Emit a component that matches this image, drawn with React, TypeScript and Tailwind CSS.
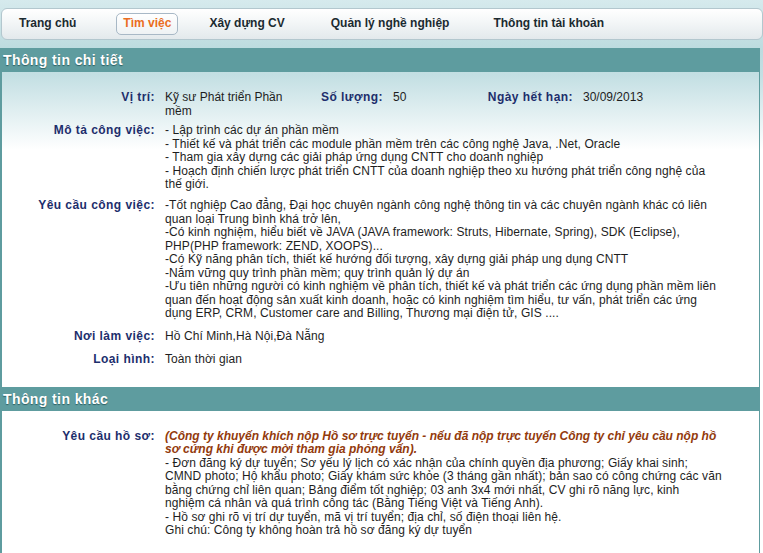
const font = { fontFamily: '"Liberation Sans", Arial, sans-serif' };

const moTa = [
  "- Lập trình các dự án phần mềm",
  "- Thiết kế và phát triển các module phần mềm trên các công nghệ Java, .Net, Oracle",
  "- Tham gia xây dựng các giải pháp ứng dụng CNTT cho doanh nghiệp",
  "- Hoạch định chiến lược phát triển CNTT của doanh nghiệp theo xu hướng phát triển công nghệ của",
  "thế giới.",
];

const yeuCau = [
  "-Tốt nghiệp Cao đẳng, Đại học chuyên ngành công nghệ thông tin và các chuyên ngành khác có liên",
  "quan loại Trung bình khá trở lên,",
  "-Có kinh nghiệm, hiểu biết về JAVA (JAVA framework: Struts, Hibernate, Spring), SDK (Eclipse),",
  "PHP(PHP framework: ZEND, XOOPS)...",
  "-Có Kỹ năng phân tích, thiết kế hướng đối tượng, xây dựng giải pháp ung dụng CNTT",
  "-Nắm vững quy trình phần mềm; quy trình quản lý dự án",
  "-Ưu tiên những người có kinh nghiệm về phân tích, thiết kế và phát triển các ứng dụng phần mềm liên",
  "quan đến hoạt động sản xuất kinh doanh, hoặc có kinh nghiệm tìm hiểu, tư vấn, phát triển các ứng",
  "dụng ERP, CRM, Customer care and Billing, Thương mại điện tử, GIS ....",
];

const hoSo = [
  "- Đơn đăng ký dự tuyển; Sơ yếu lý lịch có xác nhận của chính quyền địa phương; Giấy khai sinh;",
  "CMND photo; Hộ khẩu photo; Giấy khám sức khỏe (3 tháng gần nhất); bản sao có công chứng các văn",
  "bằng chứng chỉ liên quan; Bảng điểm tốt nghiệp; 03 anh 3x4 mới nhất, CV ghi rõ năng lực, kinh",
  "nghiệm cá nhân và quá trình công tác (Bằng Tiếng Việt và Tiếng Anh).",
  "- Hồ sơ ghi rõ vị trí dự tuyển, mã vị trí tuyển; địa chỉ, số điện thoại liên hệ.",
  "Ghi chú: Công ty không hoàn trả hồ sơ đăng ký dự tuyển",
];

function Label({ children, w = "w-[153px]" }: { children: React.ReactNode; w?: string }) {
  return (
    <div className={`${w} shrink-0 whitespace-nowrap text-right font-bold tracking-[0.45px] text-[#1d2e6c]`}>
      {children}
    </div>
  );
}

function Lines({ lines }: { lines: string[] }) {
  return (
    <div className="ml-[10px] tracking-[0.08px] text-[#1e1e1e]">
      {lines.map((l, i) => (
        <div key={i} className="whitespace-nowrap">
          {l}
        </div>
      ))}
    </div>
  );
}

function SectionHeader({ title }: { title: string }) {
  return (
    <div className="h-[24px] w-[760px] bg-[#5e9c9f] pl-[3px] text-[14px] font-bold leading-[24px] tracking-[0.4px] text-white [text-shadow:0_1px_1px_#2d5f62]">
      {title}
    </div>
  );
}

export default function App() {
  const tabs = ["Trang chủ", "Tìm việc", "Xây dựng CV", "Quản lý nghề nghiệp", "Thông tin tài khoản"];

  return (
    <div
      style={font}
      className="min-h-[553px] w-[763px] overflow-hidden bg-[linear-gradient(to_bottom,#d6eaed_0px,#bcdbdf_50px,#c3dfe3_75px,#ffffff_150px)] text-[12px] leading-[13.5px]"
    >
      {/* Menu */}
      <div className="pt-[8px] pb-[8px]">
        <div className="ml-[1px] flex h-[32px] w-[762px] items-center rounded-[6px] border border-[#b3c7ce] bg-[linear-gradient(to_bottom,#ffffff,#f3f6f7_45%,#e3e9ec)] text-[12px] font-bold text-[#1b2a30]">
          <span className="ml-[17px]">{tabs[0]}</span>
          <span className="ml-[40px] flex h-[22px] items-center rounded-[5px] border border-[#a8b8c6] bg-[linear-gradient(to_bottom,#ffffff,#eef2f4)] px-[6px] text-[#ea6d22]">
            {tabs[1]}
          </span>
          <span className="ml-[31px]">{tabs[2]}</span>
          <span className="ml-[46px]">{tabs[3]}</span>
          <span className="ml-[44px]">{tabs[4]}</span>
        </div>
      </div>

      <SectionHeader title="Thông tin chi tiết" />

      {/* Chi tiết */}
      <div className="w-[760px] border-l-2 border-r border-[#5e9c9f] pt-[19px] pb-[20px]">
        <div className="flex">
          <Label>Vị trí:</Label>
          <div className="ml-[10px] w-[130px] shrink-0 text-[#1e1e1e]">Kỹ sư Phát triển Phần mềm</div>
          <Label w="w-[88px]">Số lượng:</Label>
          <div className="ml-[10px] w-[94px] shrink-0 text-[#1e1e1e]">50</div>
          <Label w="w-[86px]">Ngày hết hạn:</Label>
          <div className="ml-[10px] text-[#1e1e1e]">30/09/2013</div>
        </div>

        <div className="mt-[6px] flex">
          <Label>Mô tả công việc:</Label>
          <Lines lines={moTa} />
        </div>

        <div className="mt-[7.5px] flex">
          <Label>Yêu cầu công việc:</Label>
          <Lines lines={yeuCau} />
        </div>

        <div className="mt-[9.5px] flex">
          <Label>Nơi làm việc:</Label>
          <Lines lines={["Hồ Chí Minh,Hà Nội,Đà Nẵng"]} />
        </div>

        <div className="mt-[9.5px] flex">
          <Label>Loại hình:</Label>
          <Lines lines={["Toàn thời gian"]} />
        </div>
      </div>

      <SectionHeader title="Thông tin khác" />

      <div className="w-[760px] border-l-2 border-r border-[#5e9c9f] bg-white pt-[19px] pb-[20px]">
        <div className="flex">
          <Label>Yêu cầu hồ sơ:</Label>
          <div className="ml-[10px] text-[#1e1e1e]">
            <div className="whitespace-nowrap font-bold italic text-[#933a0c]">
              (Công ty khuyến khích nộp Hồ sơ trực tuyến - nếu đã nộp trực tuyến Công ty chỉ yêu cầu nộp hồ
            </div>
            <div className="whitespace-nowrap font-bold italic text-[#933a0c]">
              sơ cứng khi được mời tham gia phỏng vấn).
            </div>
            {hoSo.map((l, i) => (
              <div key={i} className="whitespace-nowrap tracking-[0.08px]">
                {l}
              </div>
            ))}
          </div>
        </div>
      </div>
    </div>
  );
}
